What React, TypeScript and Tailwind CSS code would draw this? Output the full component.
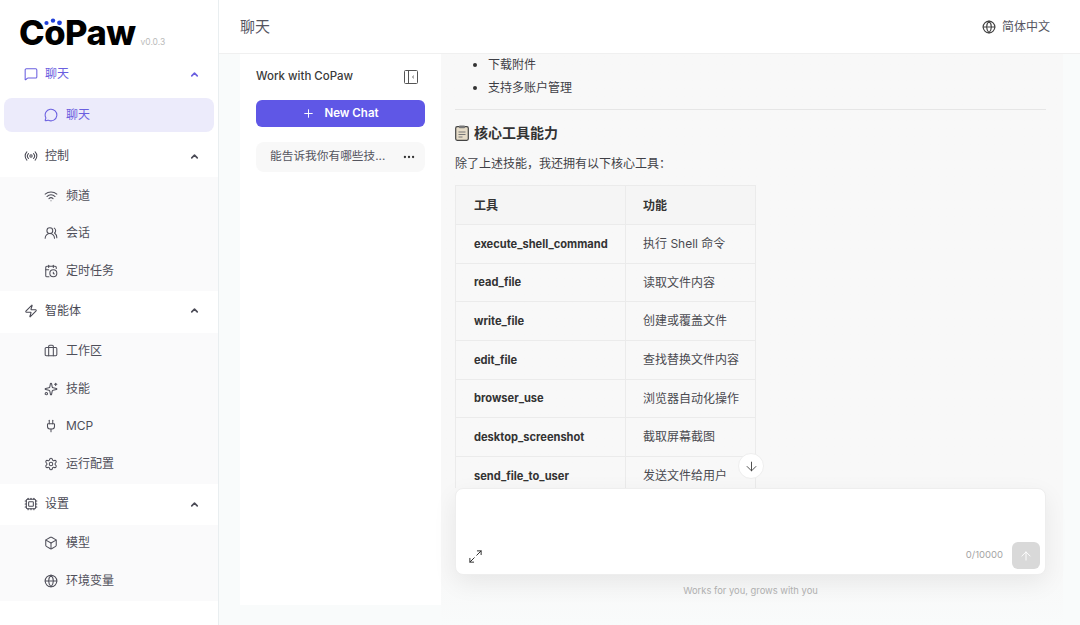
import React from "react";
import {
  ArrowDown,
  ArrowUp,
  Box,
  Briefcase,
  CalendarClock,
  ChevronUp,
  Cpu,
  Ellipsis,
  Globe,
  Maximize2,
  MessageCircle,
  MessageSquare,
  Plug,
  Plus,
  Radio,
  Settings,
  Sparkles,
  UsersRound,
  Wifi,
  Zap,
} from "lucide-react";

type Icon = React.ComponentType<{ size?: number; strokeWidth?: number; className?: string }>;

const groups: { label: string; icon: Icon; h: string; active?: boolean; items: { label: string; icon: Icon; active?: boolean }[] }[] = [
  { label: "聊天", icon: MessageSquare, h: "h-[40px]", active: true, items: [{ label: "聊天", icon: MessageCircle, active: true }] },
  {
    label: "控制",
    icon: Radio,
    h: "h-[42px]",
    items: [
      { label: "频道", icon: Wifi },
      { label: "会话", icon: UsersRound },
      { label: "定时任务", icon: CalendarClock },
    ],
  },
  {
    label: "智能体",
    icon: Zap,
    h: "h-[42px] pb-[2px]",
    items: [
      { label: "工作区", icon: Briefcase },
      { label: "技能", icon: Sparkles },
      { label: "MCP", icon: Plug },
      { label: "运行配置", icon: Settings },
    ],
  },
  {
    label: "设置",
    icon: Cpu,
    h: "h-[41px]",
    items: [
      { label: "模型", icon: Box },
      { label: "环境变量", icon: Globe },
    ],
  },
];

const tools = [
  ["execute_shell_command", "执行 Shell 命令"],
  ["read_file", "读取文件内容"],
  ["write_file", "创建或覆盖文件"],
  ["edit_file", "查找替换文件内容"],
  ["browser_use", "浏览器自动化操作"],
  ["desktop_screenshot", "截取屏幕截图"],
  ["send_file_to_user", "发送文件给用户"],
];

const Sidebar = () => (
  <aside className="w-[219px] h-full shrink-0 bg-white border-r border-[#e9eef0] flex flex-col">
    {/* Logo */}
    <div className="h-[54px] shrink-0 pl-[19px] flex items-start relative">
      <span className="text-[34.5px] leading-none font-extrabold tracking-[-0.5px] text-black mt-[16px] font-['Inter',sans-serif]">CoPaw</span>
      <span className="text-[8.5px] text-[#bbbbbb] mt-[36px] ml-[5px]">v0.0.3</span>
      <svg className="absolute left-[44px] top-[18px]" width="19" height="8" viewBox="0 0 19 8">
        <circle cx="2.5" cy="5" r="2.1" fill="#1f3fd8" />
        <circle cx="9" cy="2.6" r="2.2" fill="#1f3fd8" />
        <circle cx="15.5" cy="4.8" r="2.4" fill="#1f3fd8" />
      </svg>
    </div>

    {groups.map((g) => (
      <div key={g.label + g.h}>
        <div className={`${g.h} flex items-center pl-[23px] pr-[18px] text-[12px] ${g.active ? "text-[#6a5fe0]" : "text-[#4a4a55]"}`}>
          <span className="w-[15px] flex justify-center">
            <g.icon size={14} strokeWidth={1.8} />
          </span>
          <span className="ml-[7px] flex-1">{g.label}</span>
          <ChevronUp size={11} strokeWidth={3.5} />
        </div>
        <div className={g.active ? "bg-white pb-[3px]" : "bg-[#fafafb] pb-[1px]"}>
          {g.items.map((it) =>
            it.active ? (
              <div key={it.label} className="mx-[4px] h-[34px] mt-[4px] rounded-[8px] bg-[#ecebfb] flex items-center pl-[39px] text-[12px] text-[#6a5fe0]">
                <span className="w-[15px] flex justify-center">
                  <it.icon size={14} strokeWidth={1.8} />
                </span>
                <span className="ml-[8px]">{it.label}</span>
              </div>
            ) : (
              <div key={it.label} className="h-[37.5px] flex items-center pl-[43px] text-[12px] text-[#4f4f5a]">
                <span className="w-[15px] flex justify-center">
                  <it.icon size={14} strokeWidth={1.8} />
                </span>
                <span className="ml-[8px]">{it.label}</span>
              </div>
            ),
          )}
        </div>
      </div>
    ))}
  </aside>
);

const ChatList = () => (
  <div className="w-[201px] shrink-0 h-[551px] bg-white ml-[21px] pl-[16px] pr-[16px]">
    <div className="h-[46px] flex items-center justify-between">
      <span className="text-[11.5px] font-medium text-[#3a3a3a]">Work with CoPaw</span>
      <svg width="14" height="14" viewBox="0 0 14 14" fill="none" stroke="#555" strokeWidth="1" className="mr-[7px]">
        <rect x="0.5" y="0.5" width="13" height="13" rx="1" />
        <path d="M4.5 0.5v13M9.8 5.8 8.5 7l1.3 1.2" />
      </svg>
    </div>
    <button className="w-full h-[27px] rounded-[6px] bg-[#5f57e6] text-white text-[11.5px] font-semibold flex items-center justify-center">
      <Plus size={13} strokeWidth={1.8} />
      <span className="ml-[9px]">New Chat</span>
    </button>
    <div className="mt-[15px] h-[30px] rounded-[8px] bg-[#f8f8f8] flex items-center pl-[14px] pr-[9px] text-[11.7px] text-[#55555f]">
      <span className="flex-1 truncate">能告诉我你有哪些技...</span>
      <Ellipsis size={14} strokeWidth={2} className="text-[#333]" />
    </div>
  </div>
);

const Messages = () => (
  <div className="relative flex-1 min-h-0">
    <div className="h-full overflow-hidden pr-[17px] text-[12px] text-[#3f3f46]">
      <ul className="list-disc pl-[33px] marker:text-[#333]">
        <li className="h-[23px] leading-[21px]">下载附件</li>
        <li className="h-[23px] leading-[21px]">支持多账户管理</li>
      </ul>
      <div className="mt-[9px] border-t border-[#e6e6e6]" />
      <h3 className="mt-[13px] flex items-center text-[14px] leading-[20px] font-bold text-[#333]">
        <svg width="14" height="16" viewBox="0 0 14 16" fill="none" className="mr-[5px]">
          <rect x="0.7" y="1.7" width="12.6" height="13.6" rx="1.5" fill="#e6dcc8" stroke="#444" strokeWidth="1.2" />
          <rect x="4" y="0.6" width="6" height="2.6" rx="0.8" fill="#777" />
          <path d="M3.5 7h7M3.5 9.5h7M3.5 12h4" stroke="#777" />
        </svg>
        核心工具能力
      </h3>
      <p className="mt-[11px] leading-[20px]">除了上述技能，我还拥有以下核心工具：</p>
      <table className="mt-[11px] w-[301px] border-collapse table-fixed text-[12px]">
        <thead>
          <tr className="h-[39px] bg-[#f5f5f5] text-left">
            <th className="w-[170px] border border-[#ebebeb] pl-[18px] pt-[1px] font-semibold text-[#333]">工具</th>
            <th className="border border-[#ebebeb] pl-[17px] pt-[1px] font-semibold text-[#333]">功能</th>
          </tr>
        </thead>
        <tbody>
          {tools.map(([name, desc]) => (
            <tr key={name} className="h-[38.7px]">
              <td className="border border-[#ebebeb] pl-[18px] font-bold text-[11.1px] text-[#333] whitespace-nowrap">{name}</td>
              <td className="border border-[#ebebeb] pl-[17px] text-[#4a4a50] whitespace-nowrap">{desc}</td>
            </tr>
          ))}
        </tbody>
      </table>
    </div>
    <div className="absolute left-[283px] bottom-[9px] w-[26px] h-[26px] rounded-full bg-white border border-[#eeeeee] flex items-center justify-center text-[#444]">
      <ArrowDown size={15} strokeWidth={1.5} />
    </div>
  </div>
);

const Composer = () => (
  <div className="h-[87px] shrink-0 w-[591px] rounded-[8px] bg-white border border-[#eeeeee] shadow-[0_8px_24px_rgba(0,0,0,0.07)] relative z-10 flex items-end justify-between pl-[12px] pr-[5px] pb-[5px]">
    <Maximize2 size={15} strokeWidth={1.6} className="mb-[5px] text-[#333]" />
    <div className="flex items-center">
      <span className="text-[9.5px] text-[#a5a5a5]">0/10000</span>
      <div className="ml-[9px] w-[28px] h-[27px] rounded-[6px] bg-[#d9d9d9] flex items-center justify-center text-white">
        <ArrowUp size={14} strokeWidth={1.6} />
      </div>
    </div>
  </div>
);

export default function App() {
  return (
    <div className="w-[1080px] h-[625px] overflow-hidden flex bg-[#f9fbfb] font-['Inter','Noto_Sans_CJK_SC',sans-serif]">
      <Sidebar />
      <div className="flex-1 min-w-0 flex flex-col">
        <header className="h-[54px] shrink-0 bg-white border-b border-[#f0f0f0] flex items-center justify-between pl-[21px] pr-[30px]">
          <span className="text-[15px] text-[#55555f] pt-[1px]">聊天</span>
          <div className="flex items-center text-[12px] text-[#55555f]">
            <Globe size={14} strokeWidth={2} className="text-[#444]" />
            <span className="ml-[6px]">简体中文</span>
          </div>
        </header>
        <div className="flex-1 min-h-0 flex">
          <ChatList />
          <main className="w-[622px] shrink-0 flex flex-col pl-[14px] bg-gradient-to-b from-[#f8f8f8] from-[90%] to-[#f9fbfb]">
            <div className="flex-1 min-h-0 flex flex-col">
              <Messages />
            </div>
            <Composer />
            <div className="h-[50px] shrink-0 pr-[17px] pt-[9px] text-center text-[9.4px] text-[#b3b3b3]">Works for you, grows with you</div>
          </main>
        </div>
      </div>
    </div>
  );
}
